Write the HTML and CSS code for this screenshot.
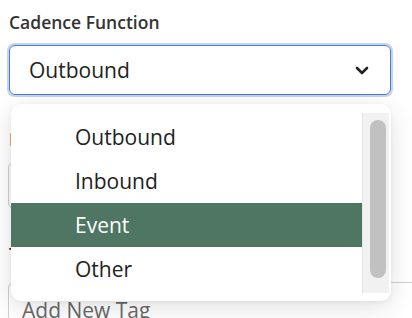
FILE: index.html
```html
<!DOCTYPE html>
<html lang="en">
<head>
  <meta charset="UTF-8">
  <title>Cadence Settings</title>
  <link rel="stylesheet" href="styles.css">
</head>
<body>

<form class="form">
  <div class="field">
    <label class="label">Cadence Function</label>
    <div class="select is-open">
      <span class="select-value">Outbound</span>
      <svg class="chevron" width="14" height="9" viewBox="0 0 14 9">
        <path d="M2 2 L7 7 L12 2" fill="none" stroke="#222" stroke-width="2.6" stroke-linecap="round" stroke-linejoin="round"/>
      </svg>

      <div class="menu">
        <ul class="options">
          <li class="option">Outbound</li>
          <li class="option">Inbound</li>
          <li class="option selected">Event</li>
          <li class="option">Other</li>
        </ul>
        <div class="scrollbar">
          <div class="thumb"></div>
        </div>
      </div>
    </div>
  </div>

  <div class="field field-second">
    <label class="label">Priority</label>
    <div class="input"></div>
  </div>

  <div class="field field-tags">
    <label class="label">Tags</label>
    <div class="input input-tags">Add New Tag</div>
  </div>
</form>

</body>
</html>
```

FILE: styles.css
```css
* {
  box-sizing: border-box;
  margin: 0;
  padding: 0;
}

html, body {
  height: 100%;
}

body {
  font-family: 'Open Sans', Lato, sans-serif;
  background: #ffffff;
  color: #222;
  overflow: hidden;
}

.form {
  padding: 12px 21px 0 9px;
}

.field {
  display: flex;
  flex-direction: column;
}

.label {
  font-size: 17.5px;
  font-weight: 600;
  color: #333;
  line-height: 20px;
  height: 20px;
  margin-bottom: 13px;
}

.select {
  position: relative;
  height: 50px;
  border: 1px solid #4d79d2;
  border-radius: 6px;
  box-shadow: 0 0 0 2px #c3d4f2;
  display: flex;
  align-items: center;
  justify-content: space-between;
  padding: 0 21px 0 19px;
}

.select-value {
  font-size: 21px;
}

.chevron {
  display: block;
}

.menu {
  position: absolute;
  top: 58px;
  left: 1px;
  width: 380px;
  height: 197px;
  background: #fff;
  border-radius: 10px;
  box-shadow: 0 6px 26px rgba(0, 0, 0, 0.13), 0 1px 4px rgba(0, 0, 0, 0.05);
  display: flex;
  padding: 9px 2px 8px 0;
  z-index: 10;
}

.options {
  list-style: none;
  flex: 1;
  padding-top: 2px;
}

.option {
  height: 44px;
  line-height: 44px;
  padding-left: 64px;
  font-size: 21px;
  color: #222;
}

.option.selected {
  background: #4f7663;
  color: #fff;
}

.scrollbar {
  width: 27px;
  background: #f1f1f1;
  border-left: 1px solid #e6e6e6;
  padding: 7px 3px 0 7px;
}

.thumb {
  height: 158px;
  background: #c1c1c1;
  border-radius: 8px;
}

.field-second {
  margin-top: 34px;
}

.input {
  height: 47px;
  border: 1px solid #cfcfcf;
  border-radius: 6px;
  margin-left: -1px;
}

.field-tags {
  margin-top: 35px;
}

.field-tags .label {
  margin-bottom: 18px;
}

.input-tags {
  margin-right: -40px;
  height: 40px;
  padding: 13px 0 0 13px;
  font-size: 21px;
  color: #6a6a6a;
}
```
